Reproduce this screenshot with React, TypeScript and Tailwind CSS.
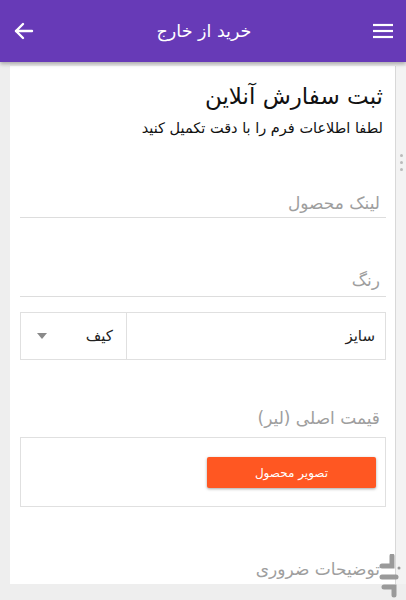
import React from "react";

export default function App() {
  return (
    <div className="w-[406px] h-[600px] overflow-hidden bg-[#eeeeee] relative" style={{ fontFamily: '"DejaVu Sans", "Noto Sans", sans-serif' }}>
      <div className="h-[62px] bg-[#673ab7] flex items-center justify-between px-[12px] shadow-[0_2px_4px_rgba(0,0,0,0.3)] relative z-10">
        <svg width="24" height="24" viewBox="0 0 24 24" fill="none" stroke="white" strokeWidth="2.4" strokeLinecap="round" strokeLinejoin="round">
          <path d="M20 12H4" />
          <path d="M11 5l-7 7 7 7" />
        </svg>
        <div className="text-white text-[17.5px]" dir="rtl">خرید از خارج</div>
        <svg width="22" height="22" viewBox="0 0 22 22" fill="none" stroke="white" strokeWidth="2.2">
          <path d="M1 5h20" />
          <path d="M1 11h20" />
          <path d="M1 17h20" />
        </svg>
      </div>
      <div className="flex mt-[4px]">
        <div className="ml-[10px] w-[386px] h-[518px] bg-white border-r border-[#d8d8d8]" dir="rtl">
          <div className="pr-[12px] pt-[14px] text-[23px] leading-[32px] text-[#111]">ثبت سفارش آنلاین</div>
          <div className="pr-[12px] pt-[4px] h-[25px] text-[14.5px] leading-[24px] text-[#111]">لطفا اطلاعات فرم را با دقت تکمیل کنید</div>
          <div className="mr-[9px] ml-[10px] mt-[50px] h-[31px] pt-[5px] border-b border-[#dddddd] pr-[6px] text-[17px] leading-[22px] text-[#9e9e9e]">لینک محصول</div>
          <div className="mr-[9px] ml-[10px] mt-[45px] h-[34px] pt-[6px] border-b border-[#dddddd] pr-[6px] text-[17px] leading-[22px] text-[#9e9e9e]">رنگ</div>
          <div className="mr-[9px] ml-[10px] mt-[15px] h-[48px] border border-[#e0e0e0] flex">
            <div className="flex-1 flex items-center pr-[10px] text-[15px] text-[#222]">سایز</div>
            <div className="w-[106px] border-r border-[#e0e0e0] flex items-center justify-between pr-[13px] pl-[16px] text-[15px] text-[#222]">
              <span>کیف</span>
              <svg width="10" height="6" viewBox="0 0 10 6"><path d="M0 0h10L5 6z" fill="#8a8a8a" /></svg>
            </div>
          </div>
          <div className="mr-[9px] ml-[10px] mt-[46px] pr-[6px] text-[17px] leading-[24px] text-[#9e9e9e]">قیمت اصلی (لیر)</div>
          <div className="mr-[9px] ml-[10px] mt-[7px] h-[70px] border border-[#e0e0e0] pt-[19px] pr-[9px]">
            <div className="w-[169px] h-[31px] bg-[#ff5722] rounded-[2px] shadow-[0_1px_3px_rgba(0,0,0,0.35)] flex items-center justify-center text-white text-[12px]">تصویر محصول</div>
          </div>
          <div className="mr-[9px] mt-[50px] pr-[6px] text-[17px] leading-[24px] text-[#9e9e9e]">توضیحات ضروری</div>
        </div>
        <div className="w-[10px] h-[518px] bg-[#f3f3f3] flex flex-col items-center pt-[88px] gap-[4px]">
          <div className="w-[3px] h-[3px] rounded-full bg-[#bbb]" />
          <div className="w-[3px] h-[3px] rounded-full bg-[#bbb]" />
          <div className="w-[3px] h-[3px] rounded-full bg-[#bbb]" />
        </div>
      </div>
      <svg className="absolute right-[4px] bottom-[2px]" width="24" height="44" viewBox="0 0 24 44" fill="none" stroke="#9a9a9a" strokeWidth="5" strokeLinecap="round">
        <path d="M4 12h10V2" />
        <path d="M4 23h14" />
        <path d="M6 33h10v8" />
        <circle cx="21" cy="14" r="1.5" fill="#9a9a9a" stroke="none" />
      </svg>
    </div>
  );
}
